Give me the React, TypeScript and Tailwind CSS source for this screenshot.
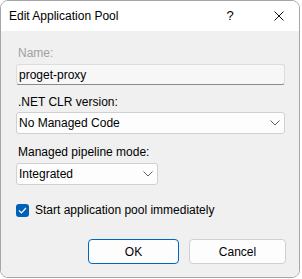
import React from "react";

// Диалог "Edit Application Pool" в стиле Windows 11
const font = { fontFamily: '"Segoe UI", "Liberation Sans", Arial, sans-serif' };

function Chevron() {
  return (
    <svg width="10" height="6" viewBox="0 0 10 6" className="shrink-0">
      <path d="M0.5 0.5 L5 5 L9.5 0.5" fill="none" stroke="#606060" strokeWidth="1" />
    </svg>
  );
}

function Select({ value, width }: { value: string; width: string }) {
  return (
    <div
      className={`${width} h-[22px] flex items-center justify-between pl-[2px] pr-[4px] bg-[#fdfdfd] border border-[#d0d0d0] rounded-[3px] text-[12px] text-black`}
    >
      <span>{value}</span>
      <Chevron />
    </div>
  );
}

export default function App() {
  return (
    <div className="w-[302px] h-[279px] bg-white" style={font}>
      <div className="w-[300px] h-[278px] border border-[#a6a6a6] rounded-[8px] overflow-hidden flex flex-col">
        {/* Заголовок окна */}
        <div className="h-[30px] bg-white flex items-center pl-2 text-[12px] text-black">
          <span className="flex-1">Edit Application Pool</span>
          <span className="w-[10px] text-center mr-[39px] text-[13px]">?</span>
          <svg width="10" height="10" viewBox="0 0 10 10" className="mr-[15px]">
            <path d="M0.5 0.5 L9.5 9.5 M9.5 0.5 L0.5 9.5" stroke="#111" strokeWidth="1" />
          </svg>
        </div>

        {/* Тело диалога */}
        <div className="flex-1 bg-[#f0f0f0] px-[15px] pt-[14px] text-[12px] text-black">
          <div className="h-[16px] leading-[16px] pl-[2px] text-[#a0a0a0]">Name:</div>
          <div className="mt-[3px] w-[269px] h-[21px] flex items-center pl-[2px] bg-[#f7f7f7] border border-[#dcdcdc] border-b-[#8a8a8a] rounded-[3px]">
            proget-proxy
          </div>

          <div className="mt-[9px] h-[16px] leading-[16px] pl-[2px]">.NET CLR version:</div>
          <div className="mt-[2px]">
            <Select value="No Managed Code" width="w-[269px]" />
          </div>

          <div className="mt-[10px] h-[16px] leading-[16px] pl-[2px]">Managed pipeline mode:</div>
          <div className="mt-[3px]">
            <Select value="Integrated" width="w-[142px]" />
          </div>

          <div className="mt-[17px] h-[16px] flex items-center gap-[6px]">
            <div className="w-[13px] h-[13px] rounded-[3px] bg-[#005fb8] flex items-center justify-center">
              <svg width="9" height="7" viewBox="0 0 9 7">
                <path d="M1 3.5 L3.5 6 L8 1" fill="none" stroke="#fff" strokeWidth="1.2" />
              </svg>
            </div>
            <span>Start application pool immediately</span>
          </div>

          <div className="mt-[21px] w-[270px] flex justify-end gap-[10px]">
            <button className="w-[91px] h-[25px] bg-[#fdfdfd] border border-[#0067c0] rounded-[4px] text-[12px] text-black">
              OK
            </button>
            <button className="w-[97px] h-[25px] bg-[#fdfdfd] border border-[#d0d0d0] rounded-[4px] text-[12px] text-black">
              Cancel
            </button>
          </div>
        </div>
      </div>
    </div>
  );
}
